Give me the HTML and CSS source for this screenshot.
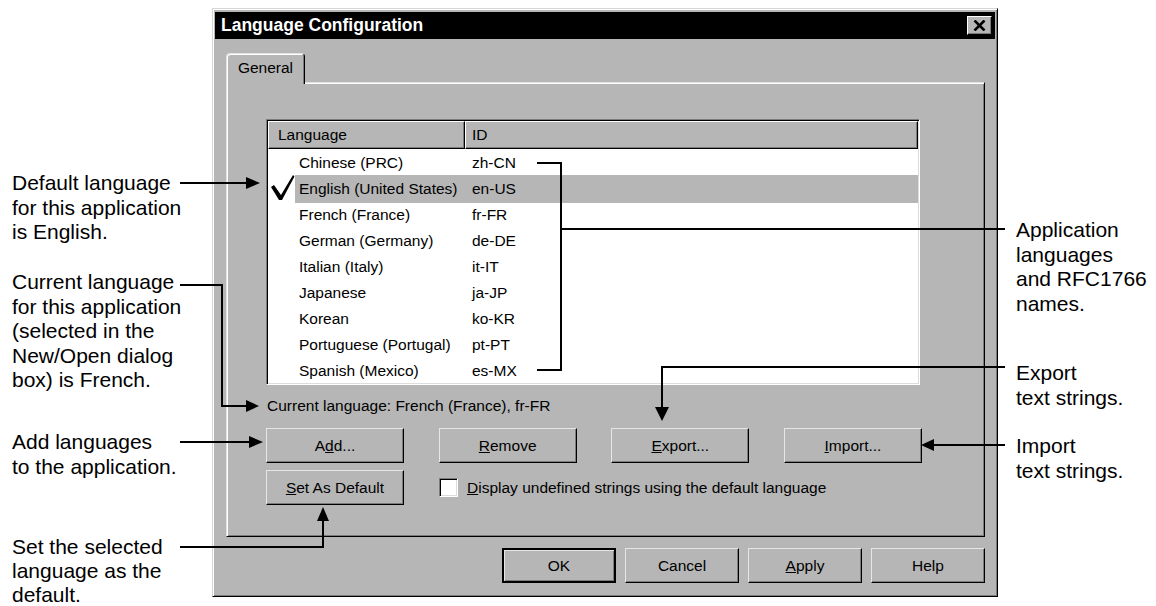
FILE: index.html
```html
<!DOCTYPE html>
<html lang="en">
<head>
    <meta charset="UTF-8">
    <title>Language Configuration</title>
    <link rel="stylesheet" href="styles.css">
</head>
<body>
    <div class="page">
        <div class="dialog">
            <div class="titlebar">
                <span class="title">Language Configuration</span>
                <button class="close-btn">
                    <svg width="13" height="11" viewBox="0 0 13 11"><path d="M1.5 0.5 L11.5 10.5 M11.5 0.5 L1.5 10.5" stroke="#000" stroke-width="2.6" fill="none"/></svg>
                </button>
            </div>
            <div class="content">
                <div class="tabs">
                    <div class="tab">General</div>
                </div>
                <div class="panel">
                    <div class="listview">
                        <div class="lv-header">
                            <div class="lv-col lv-col-name">Language</div>
                            <div class="lv-col lv-col-id">ID</div>
                        </div>
                        <div class="lv-row"><span class="lv-check"></span><span class="lv-name">Chinese (PRC)</span><span class="lv-id">zh-CN</span></div>
                        <div class="lv-row selected"><span class="lv-check"><svg width="25" height="26" viewBox="0 0 25 26"><polygon points="1,12 4,10 11,20 23,0 24.5,1.5 12,25 9,25" fill="#000"/></svg></span><span class="lv-name">English (United States)</span><span class="lv-id">en-US</span></div>
                        <div class="lv-row"><span class="lv-check"></span><span class="lv-name">French (France)</span><span class="lv-id">fr-FR</span></div>
                        <div class="lv-row"><span class="lv-check"></span><span class="lv-name">German (Germany)</span><span class="lv-id">de-DE</span></div>
                        <div class="lv-row"><span class="lv-check"></span><span class="lv-name">Italian (Italy)</span><span class="lv-id">it-IT</span></div>
                        <div class="lv-row"><span class="lv-check"></span><span class="lv-name">Japanese</span><span class="lv-id">ja-JP</span></div>
                        <div class="lv-row"><span class="lv-check"></span><span class="lv-name">Korean</span><span class="lv-id">ko-KR</span></div>
                        <div class="lv-row"><span class="lv-check"></span><span class="lv-name">Portuguese (Portugal)</span><span class="lv-id">pt-PT</span></div>
                        <div class="lv-row"><span class="lv-check"></span><span class="lv-name">Spanish (Mexico)</span><span class="lv-id">es-MX</span></div>
                    </div>
                    <div class="current">Current language: French (France), fr-FR</div>
                    <div class="btn-row">
                        <button class="btn">A<u>d</u>d...</button>
                        <button class="btn"><u>R</u>emove</button>
                        <button class="btn"><u>E</u>xport...</button>
                        <button class="btn"><u>I</u>mport...</button>
                    </div>
                    <div class="opt-row">
                        <button class="btn"><u>S</u>et As Default</button>
                        <label class="check">
                            <span class="check-box"></span>
                            <span><u>D</u>isplay undefined strings using the default language</span>
                        </label>
                    </div>
                </div>
                <div class="dlg-buttons">
                    <button class="btn btn-small btn-default">OK</button>
                    <button class="btn btn-small">Cancel</button>
                    <button class="btn btn-small"><u>A</u>pply</button>
                    <button class="btn btn-small">Help</button>
                </div>
            </div>
        </div>

        <div class="note note-default">Default language<br>for this application<br>is English.</div>
        <div class="note note-current">Current language<br>for this application<br>(selected in the<br>New/Open dialog<br>box) is French.</div>
        <div class="note note-add">Add languages<br>to the application.</div>
        <div class="note note-set">Set the selected<br>language as the<br>default.</div>
        <div class="note note-apps">Application<br>languages<br>and RFC1766<br>names.</div>
        <div class="note note-export">Export<br>text strings.</div>
        <div class="note note-import">Import<br>text strings.</div>

        <svg class="callouts" width="1156" height="606" viewBox="0 0 1156 606">
            <g stroke="#000" stroke-width="2" fill="none">
                <line x1="180" y1="183" x2="250" y2="183"/>
                <polyline points="180,285 222,285 222,406 250,406"/>
                <line x1="180" y1="442" x2="252" y2="442"/>
                <polyline points="180,547 323,547 323,518"/>
                <polyline points="537,163 561,163 561,370 537,370"/>
                <line x1="561" y1="229" x2="1005" y2="229"/>
                <polyline points="1005,367 662,367 662,410"/>
                <line x1="1005" y1="445" x2="932" y2="445"/>
            </g>
            <g fill="#000">
                <polygon points="246,177 260,183 246,189"/>
                <polygon points="246,400 259,406 246,412"/>
                <polygon points="249,436 263,442 249,448"/>
                <polygon points="317,521 323,507 329,521"/>
                <polygon points="655,407 662,421 669,407"/>
                <polygon points="934,439 921,445 934,451"/>
            </g>
        </svg>
    </div>
</body>
</html>
```

FILE: styles.css
```css
body {
    margin: 0;
    background-color: #fff;
}
.page {
    position: relative;
    width: 1156px;
    height: 606px;
    padding: 8px 0 0 212px;
    box-sizing: border-box;
    overflow: hidden;
    font-family: "Liberation Sans", Arial, sans-serif;
    color: #000;
}
.dialog {
    width: 786px;
    height: 589px;
    box-sizing: border-box;
    background-color: #b6b6b6;
    border: 1px solid;
    border-color: #d6d6d6 #000 #000 #d6d6d6;
    box-shadow: inset 1px 1px #fff, inset -1px -1px #7b7b7b;
    padding: 3px 2px 2px 2px;
    font-size: 15.5px;
}
.titlebar {
    height: 27px;
    background-color: #000;
    display: flex;
    align-items: center;
    justify-content: space-between;
    padding: 0 3px 0 6px;
}
.title {
    color: #fff;
    font-weight: bold;
    font-size: 17.5px;
}
.close-btn {
    width: 25px;
    height: 19px;
    padding: 0;
    background-color: #b6b6b6;
    border: 1px solid;
    border-color: #fff #000 #000 #fff;
    box-shadow: inset -1px -1px #7b7b7b;
    display: flex;
    align-items: center;
    justify-content: center;
}
.content {
    padding: 14px 10px 0 11px;
}
.tabs {
    display: flex;
    align-items: flex-start;
    height: 29px;
    position: relative;
    z-index: 1;
}
.tab {
    width: 79px;
    height: 31px;
    box-sizing: border-box;
    background-color: #b6b6b6;
    border: 1px solid;
    border-bottom: 0;
    border-color: #e2e2e2 #000 transparent #e2e2e2;
    border-radius: 4px 4px 0 0;
    box-shadow: inset 1px 1px #fff, inset -1px 0 #7b7b7b;
    text-align: center;
    line-height: 28px;
}
.panel {
    height: 455px;
    box-sizing: border-box;
    border: 1px solid;
    border-color: #e2e2e2 #000 #000 #e2e2e2;
    box-shadow: inset 1px 1px #fff, inset -1px -1px #7b7b7b;
    padding: 36px 0 0 39px;
}
.listview {
    width: 654px;
    height: 266px;
    box-sizing: border-box;
    background-color: #fff;
    border: 1px solid;
    border-color: #7b7b7b #fff #fff #7b7b7b;
    box-shadow: inset 1px 1px #000, inset -1px -1px #dcdcdc;
    padding: 1px;
}
.lv-header {
    display: flex;
    height: 28px;
}
.lv-col {
    box-sizing: border-box;
    height: 28px;
    line-height: 25px;
    background-color: #b6b6b6;
    border: 1px solid;
    border-color: #fff #000 #000 #fff;
    box-shadow: inset -1px -1px #7b7b7b;
}
.lv-col-name {
    width: 197px;
    padding-left: 9px;
}
.lv-col-id {
    flex: 1;
    padding-left: 6px;
}
.lv-row {
    display: grid;
    grid-template-columns: 27px 173px 1fr;
    height: 26px;
    line-height: 28px;
}
.lv-check svg {
    display: block;
    margin: 0 0 0 2px;
}
.lv-name,
.lv-id {
    padding-left: 4px;
    white-space: nowrap;
}
.lv-row.selected .lv-name,
.lv-row.selected .lv-id {
    background-color: #b6b6b6;
}
.current {
    margin-top: 12px;
    line-height: 18px;
    padding-left: 1px;
}
.btn-row {
    display: flex;
    justify-content: space-between;
    width: 656px;
    margin-top: 13px;
}
.btn {
    width: 138px;
    height: 35px;
    box-sizing: border-box;
    padding: 0;
    font-family: inherit;
    font-size: 15.5px;
    color: #000;
    background-color: #b6b6b6;
    border: 1px solid;
    border-color: #e6e6e6 #000 #000 #e6e6e6;
    box-shadow: inset -1px -1px #7b7b7b;
}
.btn-small {
    width: 114px;
}
.btn-default {
    border: 2px solid #000;
    box-shadow: inset 1px 1px #e6e6e6, inset -1px -1px #7b7b7b;
}
.opt-row {
    display: flex;
    align-items: center;
    margin-top: 7px;
}
.check {
    display: flex;
    align-items: center;
    gap: 9px;
    margin-left: 35px;
}
.check-box {
    width: 19px;
    height: 19px;
    box-sizing: border-box;
    background-color: #fff;
    border: 1px solid;
    border-color: #7b7b7b #fff #fff #7b7b7b;
    box-shadow: inset 1px 1px #000, inset -1px -1px #dcdcdc;
}
.dlg-buttons {
    display: flex;
    justify-content: flex-end;
    gap: 9px;
    margin-top: 11px;
}
.note {
    position: absolute;
    font-size: 21px;
    line-height: 24.5px;
    white-space: nowrap;
}
.note-default { left: 12px; top: 171px; }
.note-current { left: 12px; top: 270px; }
.note-add { left: 12px; top: 430px; }
.note-set { left: 12px; top: 535px; line-height: 24px; }
.note-apps { left: 1016px; top: 218px; }
.note-export { left: 1016px; top: 361px; }
.note-import { left: 1016px; top: 434px; }
.callouts {
    position: absolute;
    left: 0;
    top: 0;
    pointer-events: none;
}
```
